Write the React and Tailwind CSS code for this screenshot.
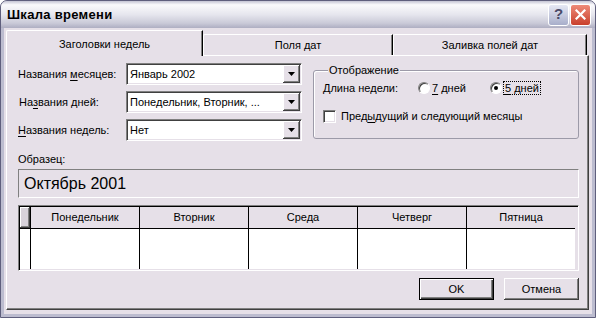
import React from 'react';

const raised =
  'shadow-[inset_-1px_-1px_0_#404040,inset_1px_1px_0_#ffffff,inset_-2px_-2px_0_#808080]';

const Combo = ({ value }) => (
  <div className="w-[176px] h-[22px] flex bg-white border border-t-[#808080] border-l-[#808080] border-b-white border-r-white shadow-[inset_1px_1px_0_#404040,inset_-1px_-1px_0_#e6e0e8] p-[1px]">
    <div className="flex-1 pl-[2px] flex items-center whitespace-nowrap overflow-hidden">{value}</div>
    <div className={`w-[17px] h-full bg-[#e6e0e8] flex items-center justify-center ${raised}`}>
      <svg width="7" height="4" viewBox="0 0 7 4">
        <path d="M0 0h7L3.5 4z" fill="#000" />
      </svg>
    </div>
  </div>
);

const Radio = ({ checked }) => (
  <div className="w-[12px] h-[12px] rounded-full bg-white border border-t-[#808080] border-l-[#808080] border-b-white border-r-white shadow-[inset_1px_1px_0_#404040] flex items-center justify-center">
    {checked && <div className="w-[4px] h-[4px] rounded-full bg-black" />}
  </div>
);

const Tab = ({ label, active, width }) => (
  <div
    className={
      active
        ? `${width} h-[26px] -mb-[1px] relative z-10 bg-[#e6e0e8] border-t border-l border-white border-r border-r-black rounded-tl-[2px] shadow-[inset_-1px_0_0_#808080] flex items-center justify-center pt-[1px]`
        : `${width} h-[21px] bg-[#e6e0e8] border-t border-l border-white border-r border-r-black rounded-tl-[2px] shadow-[inset_-1px_0_0_#808080] flex items-center justify-center`
    }
  >
    {label}
  </div>
);

const days = ['Понедельник', 'Вторник', 'Среда', 'Четверг', 'Пятница'];

export default function App() {
  return (
    <div className="w-[596px] h-[318px] flex flex-col font-['Liberation_Sans',Arial,sans-serif] text-[11px] text-black border border-[#5f5f7d] rounded-t-[7px] overflow-hidden bg-[#bcbccf]">
      {/* title bar */}
      <div className="h-[27px] flex items-center pl-[6px] pr-[4px] bg-[linear-gradient(to_bottom,#c4c4d4_0%,#fafafc_14%,#e6e6ee_50%,#cacad8_82%,#aeaec2_100%)]">
        <span className="flex-1 font-bold text-[13px] tracking-[0.3px]">Шкала времени</span>
        <div className="flex gap-[1px]">
          <div className="w-[21px] h-[22px] rounded-[3px] border border-white bg-[linear-gradient(to_bottom,#e6e8f4,#a8aeca)] flex items-center justify-center text-[15px] font-bold text-[#4a4a68]">
            ?
          </div>
          <div className="w-[21px] h-[22px] rounded-[3px] border border-white bg-[linear-gradient(to_bottom,#ee8a78,#c9402c)] flex items-center justify-center">
            <svg width="11" height="11" viewBox="0 0 11 11">
              <path d="M1.5 1.5l8 8M9.5 1.5l-8 8" stroke="#fff" strokeWidth="2.2" strokeLinecap="square" />
            </svg>
          </div>
        </div>
      </div>

      {/* frame + face */}
      <div className="flex-1 flex px-[3px] pb-[3px]">
        <div className="flex-1 flex flex-col bg-[#e6e0e8] pt-[2px] pl-[2px] pr-[3px] pb-[4px]">
          <div className="h-[25px] flex items-end">
            <Tab label="Заголовки недель" active width="w-[197px]" />
            <Tab label="Поля дат" width="w-[190px]" />
            <Tab label="Заливка полей дат" width="w-[194px]" />
          </div>

          <div className="flex-1 flex flex-col border border-white border-r-[#404040] border-b-[#404040] shadow-[inset_-1px_-1px_0_#808080] pt-[7px] pl-[11px] pr-[9px]">
            <div className="flex">
              <div className="flex flex-col gap-[6px]">
                <div className="flex items-center">
                  <span className="w-[108px]">
                    Названия <span className="underline underline-offset-2">м</span>есяцев:
                  </span>
                  <Combo value="Январь 2002" />
                </div>
                <div className="flex items-center">
                  <span className="w-[108px] pl-[1px]">
                    На<span className="underline underline-offset-2">з</span>вания дней:
                  </span>
                  <Combo value="Понедельник, Вторник, ..." />
                </div>
                <div className="flex items-center">
                  <span className="w-[108px]">
                    <span className="underline underline-offset-2">Н</span>азвания недель:
                  </span>
                  <Combo value="Нет" />
                </div>
              </div>

              <fieldset className="ml-[11px] mt-[1px] flex-1 h-[75px] border border-[#9c9aa8] rounded-[3px] shadow-[inset_1px_1px_0_#ffffff] pl-[9px]">
                <legend className="ml-[5px] px-[1px] bg-[#e6e0e8] leading-[13px]">Отображение</legend>
                <div className="flex items-center h-[16px] mt-[3px]">
                  <span className="w-[95px]">Длина недели:</span>
                  <div className="w-[72px] flex items-center gap-[2px]">
                    <Radio />
                    <span>
                      <span className="underline underline-offset-2">7</span> дней
                    </span>
                  </div>
                  <div className="flex items-center gap-[1px]">
                    <Radio checked />
                    <span className="border border-dotted border-black px-[1px] leading-[12px]">
                      <span className="underline underline-offset-2">5</span> дней
                    </span>
                  </div>
                </div>
                <div className="flex items-center gap-[5px] mt-[12px]">
                  <div className="w-[13px] h-[13px] bg-white border border-t-[#808080] border-l-[#808080] border-b-white border-r-white shadow-[inset_1px_1px_0_#404040,inset_-1px_-1px_0_#e6e0e8]" />
                  <span>
                    Пред<span className="underline underline-offset-2">ы</span>дущий и следующий месяцы
                  </span>
                </div>
              </fieldset>
            </div>

            <div className="mt-[12px] leading-[13px]">Образец:</div>
            <div className="mt-[3px] h-[29px] border border-t-[#808080] border-l-[#808080] border-b-white border-r-white flex items-center pl-[5px] text-[16px]">
              Октябрь 2001
            </div>

            <div className="mt-[7px] h-[66px] flex border border-t-[#808080] border-l-[#808080] border-b-white border-r-white shadow-[inset_1px_1px_0_#000000,inset_-1px_-1px_0_#e6e0e8] p-[1px]">
              <div className="w-[10px] flex flex-col">
                <div className={`h-[22px] bg-[#d8d2da] border-b border-black ${raised}`} />
                <div className="flex-1 bg-white" />
              </div>
              {days.map((d) => (
                <div key={d} className="w-[109px] flex flex-col border-l border-black">
                  <div className="h-[22px] border-b border-black flex items-center justify-center bg-[#e6e0e8]">
                    {d}
                  </div>
                  <div className="flex-1 bg-white" />
                </div>
              ))}
            </div>

            <div className="mt-[7px] flex justify-end gap-[10px]">
              <div className="w-[75px] h-[22px] border border-black bg-[#e6e0e8] shadow-[inset_1px_1px_0_#ffffff,inset_-1px_-1px_0_#404040,inset_-2px_-2px_0_#808080] flex items-center justify-center">
                OK
              </div>
              <div className={`w-[75px] h-[22px] bg-[#e6e0e8] ${raised} flex items-center justify-center`}>
                Отмена
              </div>
            </div>
          </div>
        </div>
      </div>
    </div>
  );
}
